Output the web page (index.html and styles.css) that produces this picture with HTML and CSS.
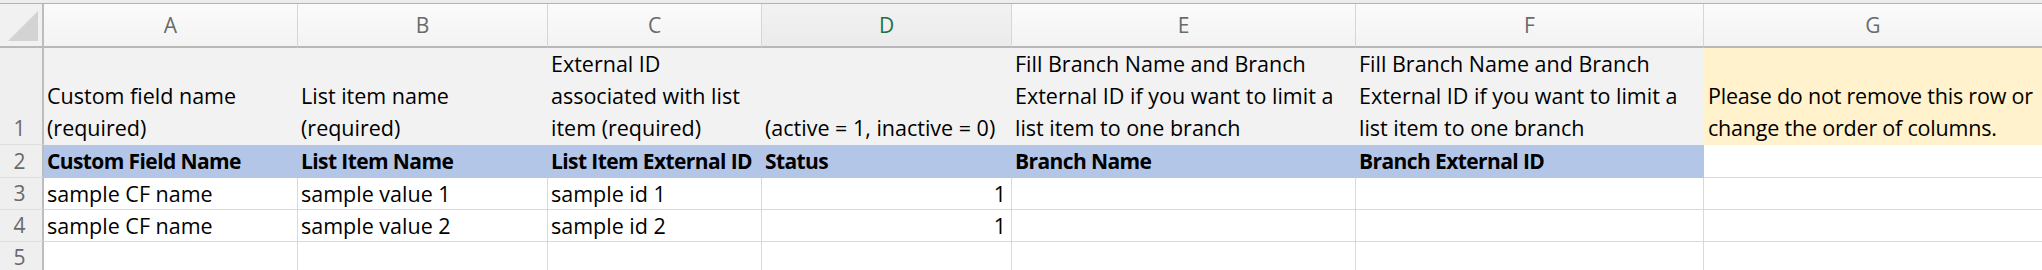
FILE: index.html
```html
<!DOCTYPE html>
<html lang="en">
<head>
<meta charset="utf-8">
<title>Custom field list items</title>
<link rel="stylesheet" href="styles.css">
</head>
<body>
<div class="window">
  <div class="top-edge"></div>
  <div class="sheet">
    <div class="corner">
      <svg class="corner-mark" width="30" height="30" viewBox="0 0 30 30"><polygon points="0,30 30,0 30,30" fill="#d3d3d3"/></svg>
    </div>
    <div class="col-head">A</div>
    <div class="col-head">B</div>
    <div class="col-head">C</div>
    <div class="col-head col-head--active">D</div>
    <div class="col-head">E</div>
    <div class="col-head">F</div>
    <div class="col-head col-head--last">G</div>

    <div class="row-head row-head--tall">1</div>
    <div class="cell hint">Custom field name<br>(required)</div>
    <div class="cell hint">List item name<br>(required)</div>
    <div class="cell hint">External ID<br>associated with list<br>item (required)</div>
    <div class="cell hint">(active = 1, inactive = 0)</div>
    <div class="cell hint">Fill Branch Name and Branch<br>External ID if you want to limit a<br>list item to one branch</div>
    <div class="cell hint">Fill Branch Name and Branch<br>External ID if you want to limit a<br>list item to one branch</div>
    <div class="cell warning">Please do not remove this row or<br>change the order of columns.</div>

    <div class="row-head">2</div>
    <div class="cell field">Custom Field Name</div>
    <div class="cell field">List Item Name</div>
    <div class="cell field">List Item External ID</div>
    <div class="cell field">Status</div>
    <div class="cell field">Branch Name</div>
    <div class="cell field">Branch External ID</div>
    <div class="cell cell--last"></div>

    <div class="row-head">3</div>
    <div class="cell">sample CF name</div>
    <div class="cell">sample value 1</div>
    <div class="cell">sample id 1</div>
    <div class="cell num">1</div>
    <div class="cell"></div>
    <div class="cell"></div>
    <div class="cell cell--last"></div>

    <div class="row-head">4</div>
    <div class="cell">sample CF name</div>
    <div class="cell">sample value 2</div>
    <div class="cell">sample id 2</div>
    <div class="cell num">1</div>
    <div class="cell"></div>
    <div class="cell"></div>
    <div class="cell cell--last"></div>

    <div class="row-head">5</div>
    <div class="cell"></div>
    <div class="cell"></div>
    <div class="cell"></div>
    <div class="cell"></div>
    <div class="cell"></div>
    <div class="cell"></div>
    <div class="cell cell--last"></div>
  </div>
</div>
</body>
</html>
```

FILE: styles.css
```css
html, body {
  margin: 0;
  padding: 0;
  background: #ffffff;
}

body {
  width: 2042px;
  height: 270px;
  overflow: hidden;
  font-family: "Open Sans", "Noto Sans", "Liberation Sans", sans-serif;
  font-size: 21.5px;
  color: #000000;
}

.window {
  display: flex;
  flex-direction: column;
}

.top-edge {
  height: 3px;
  background: #ededed;
  border-bottom: 1px solid #b3b3b3;
}

.sheet {
  display: grid;
  grid-template-columns: 44px 254px 250px 214px 250px 344px 348px 1fr;
  grid-template-rows: 44px 97px 33px 32px 32px 32px;
}

/* header strip with column letters */
.corner {
  box-sizing: border-box;
  background: #f1f1f1;
  border-right: 2px solid #bdbdbd;
  border-bottom: 2px solid #b8b8b8;
  display: flex;
  align-items: flex-end;
  justify-content: flex-end;
  padding: 0 4px 5px 0;
}

.corner-mark {
  display: block;
}

.col-head {
  box-sizing: border-box;
  background: linear-gradient(#fbfbfb, #f3f3f3);
  border-right: 1px solid #d6d6d6;
  border-bottom: 2px solid #b8b8b8;
  display: flex;
  align-items: center;
  justify-content: center;
  color: #6a6a6a;
  font-size: 21px;
  padding-bottom: 1px;
}

.col-head--active {
  background: linear-gradient(#f2f2f2, #ebebeb);
  color: #1e7145;
}

.col-head--last {
  border-right: none;
}

/* row numbers */
.row-head {
  box-sizing: border-box;
  background: #efefef;
  border-right: 2px solid #bdbdbd;
  border-bottom: 1px solid #dedede;
  display: flex;
  align-items: flex-end;
  justify-content: center;
  line-height: 31px;
  color: #6a6a6a;
  font-size: 21px;
  padding-right: 3px;
}

/* worksheet cells */
.cell {
  box-sizing: border-box;
  border-right: 1px solid #d9d9d9;
  border-bottom: 1px solid #d9d9d9;
  display: flex;
  align-items: flex-end;
  padding: 0 4px 0 3px;
  line-height: 31px;
  white-space: nowrap;
  overflow: hidden;
}

.cell--last {
  border-right: none;
}

.num {
  justify-content: flex-end;
  padding-right: 5px;
}

.hint {
  background: #f2f2f2;
  border-color: #f2f2f2;
  line-height: 32px;
}

.warning {
  background: #fff2cc;
  border-color: #fff2cc;
  border-right: none;
  line-height: 32px;
  padding-left: 4px;
  letter-spacing: -0.2px;
}

.field {
  background: #b4c6e7;
  border-color: #b4c6e7;
  font-weight: 700;
  font-size: 21px;
  letter-spacing: -0.6px;
  line-height: 32px;
}
```
